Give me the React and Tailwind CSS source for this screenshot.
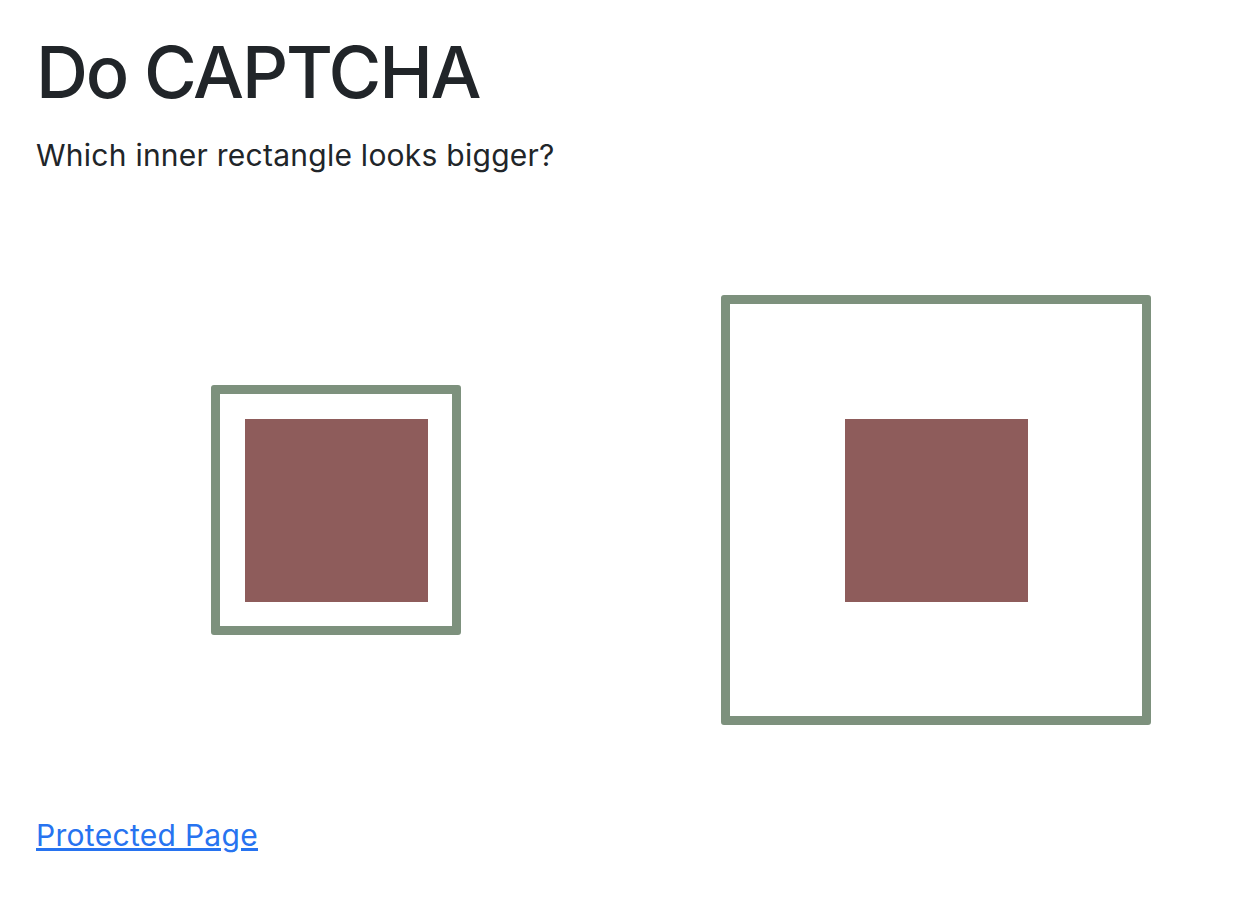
export default function App() {
  return (
    <div
      className="min-h-screen bg-white px-[36px] pt-[29px] text-[#212529]"
      style={{ fontFamily: "Inter, 'Liberation Sans', sans-serif" }}
    >
      <h1 className="m-0 mb-[18px] text-[72px] font-medium leading-[1.2] tracking-[-2.2px]">Do CAPTCHA</h1>
      <p className="m-0 text-[30px] leading-[1.5] tracking-[0.25px]">Which inner rectangle looks bigger?</p>
      <div className="mt-[117px] flex w-[1200px] items-center">
        <div className="flex w-[600px] items-center justify-center">
          <div className="flex h-[250px] w-[250px] items-center justify-center rounded-[3px] border-[9px] border-[#7d917d]">
            <div className="h-[183px] w-[183px] bg-[#8e5c5b]" />
          </div>
        </div>
        <div className="flex w-[600px] items-center justify-center">
          <div className="flex h-[430px] w-[430px] items-center justify-center rounded-[3px] border-[9px] border-[#7d917d]">
            <div className="h-[183px] w-[183px] bg-[#8e5c5b]" />
          </div>
        </div>
      </div>
      <div className="mt-[88px]">
        <a href="#" className="text-[30px] leading-[1.5] tracking-[0.3px] text-[#2773f0] underline">
          Protected Page
        </a>
      </div>
    </div>
  );
}
